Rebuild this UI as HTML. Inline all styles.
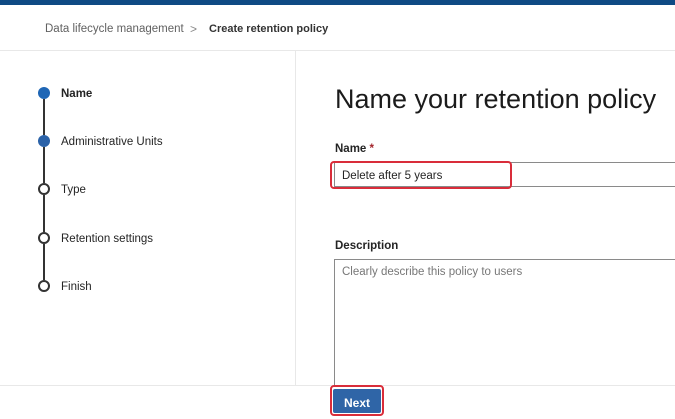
<!DOCTYPE html><html><head><style>
body{margin:0;width:675px;height:418px;overflow:hidden;background:#fff;font-family:"Liberation Sans",sans-serif;position:relative;color:#242424}
.a{position:absolute}
.c{position:absolute;left:38px;width:12px;height:12px;border-radius:50%;box-sizing:border-box}
.f{background:#1f66b5}
.o{border:2px solid #333;background:#fff}
.l{position:absolute;left:43px;width:2px;background:#333}
.s{position:absolute;left:61px;font-size:11.5px}
</style></head><body>
<div class="a" style="left:0;top:0;width:675px;height:5px;background:#0f4a84"></div>
<div class="a" style="left:45px;top:23px;font-size:11.5px;color:#616161">Data lifecycle management</div>
<div class="a" style="left:190px;top:22px;font-size:12px;color:#888">&gt;</div>
<div class="a" style="left:209px;top:23px;font-size:11px;font-weight:bold;color:#333">Create retention policy</div>
<div class="a" style="left:0;top:50px;width:675px;height:1px;background:#e8e8e8"></div>
<div class="a" style="left:295px;top:51px;width:1px;height:334px;background:#e8e8e8"></div>
<div class="l" style="top:99px;height:36px"></div>
<div class="l" style="top:147px;height:36px"></div>
<div class="l" style="top:195px;height:37px"></div>
<div class="l" style="top:244px;height:36px"></div>
<div class="c f" style="top:87px"></div>
<div class="c f" style="top:135px;background:#2b62a8"></div>
<div class="c o" style="top:183px"></div>
<div class="c o" style="top:232px"></div>
<div class="c o" style="top:280px"></div>
<div class="s" style="top:88px;font-weight:bold">Name</div>
<div class="s" style="top:136px">Administrative Units</div>
<div class="s" style="top:184px">Type</div>
<div class="s" style="top:233px">Retention settings</div>
<div class="s" style="top:281px">Finish</div>
<div class="a" style="left:335px;top:84px;font-size:27px;color:#1b1b1b">Name your retention policy</div>
<div class="a" style="left:335px;top:143px;font-size:11.5px;font-weight:bold">Name <span style="color:#a4262c">*</span></div>
<div class="a" style="left:334px;top:162px;width:345px;height:25px;border:1px solid #8a8a8a;box-sizing:border-box"></div>
<div class="a" style="left:330px;top:161px;width:182px;height:28px;border:2px solid #d92d3a;border-radius:4px;box-sizing:border-box"></div>
<div class="a" style="left:342px;top:170px;font-size:11.5px">Delete after 5 years</div>
<div class="a" style="left:335px;top:240px;font-size:11.5px;font-weight:bold">Description</div>
<div class="a" style="left:334px;top:259px;width:345px;height:130px;border:1px solid #8a8a8a;box-sizing:border-box"></div>
<div class="a" style="left:342px;top:266px;font-size:11.5px;color:#777">Clearly describe this policy to users</div>
<div class="a" style="left:0;top:385px;width:675px;height:33px;background:#fff;border-top:1px solid #e8e8e8"></div>
<div class="a" style="left:330px;top:385px;width:54px;height:31px;border:2px solid #d92d3a;border-radius:4px;box-sizing:border-box;background:#fff"></div>
<div class="a" style="left:333px;top:389px;width:48px;height:24px;background:#2f65a7;border-radius:2px;color:#fff;font-size:12px;font-weight:bold;text-align:center;line-height:28px">Next</div>
</body></html>
